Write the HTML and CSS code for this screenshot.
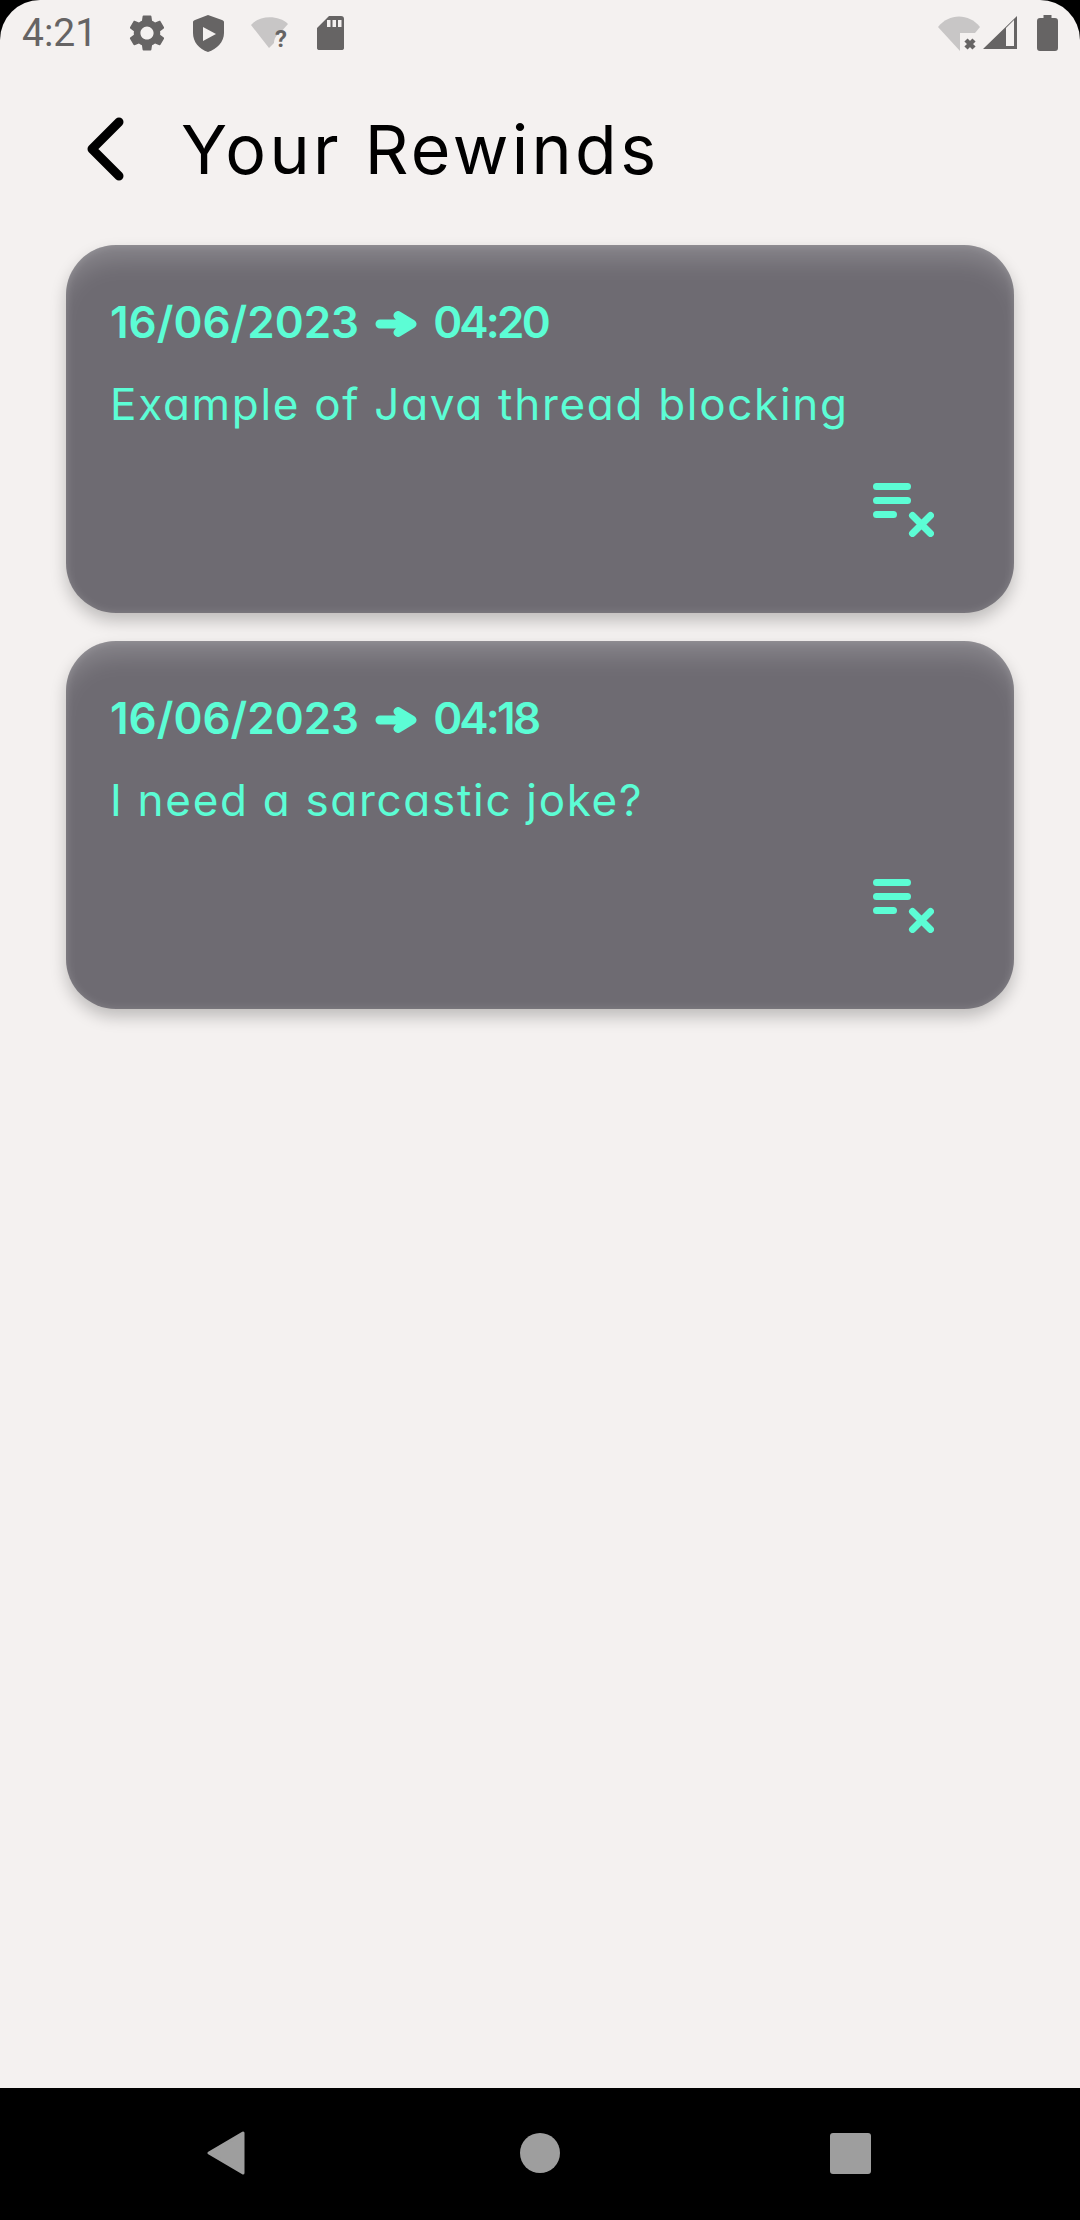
FILE: index.html
```html
<!DOCTYPE html>
<html lang="en">
<head>
  <meta charset="UTF-8">
  <meta name="viewport" content="width=device-width, initial-scale=1.0">
  <title>Your Rewinds</title>
  <link rel="stylesheet" href="styles.css">
</head>
<body>

  <div class="screen">
    <div class="status-bar">
      <span class="status-time">4:21</span>
      <div class="status-icons">
        <svg class="status-icon" viewBox="0 0 24 24"><path d="M19.14 12.94c.04-.3.06-.61.06-.94 0-.32-.02-.64-.07-.94l2.03-1.58c.18-.14.23-.41.12-.61l-1.92-3.32c-.12-.22-.37-.29-.59-.22l-2.39.96c-.5-.38-1.03-.7-1.62-.94l-.36-2.54c-.04-.24-.24-.41-.48-.41h-3.84c-.24 0-.43.17-.47.41l-.36 2.54c-.59.24-1.13.57-1.62.94l-2.39-.96c-.22-.08-.47 0-.59.22L2.74 8.87c-.12.21-.08.47.12.61l2.03 1.58c-.05.3-.09.63-.09.94s.02.64.07.94l-2.03 1.58c-.18.14-.23.41-.12.61l1.92 3.32c.12.22.37.29.59.22l2.39-.96c.5.38 1.03.7 1.62.94l.36 2.54c.05.24.24.41.48.41h3.84c.24 0 .44-.17.47-.41l.36-2.54c.59-.24 1.13-.56 1.62-.94l2.39.96c.22.08.47 0 .59-.22l1.92-3.32c.12-.22.07-.47-.12-.61l-2.01-1.58zM12 15.6c-1.98 0-3.6-1.62-3.6-3.6s1.62-3.6 3.6-3.6 3.6 1.62 3.6 3.6-1.62 3.6-3.6 3.6z"/></svg>
        <svg class="status-icon" viewBox="0 0 44 44"><path fill-rule="evenodd" d="M22 4 L36 9 C37.500 9.500 38 10 38 11.500 V22 C38 31 31 38 22 41 C13 38 7 31 7 22 V11.500 C7 10 7.500 9.500 9 9 Z M17 16 V30 L30 23 Z"/></svg>
        <svg class="status-icon" viewBox="0 0 44 44"><path class="icon-faint" d="M4 14 C12 4 32 4 41 13 L33 22 C29 24 27 28 27 32 L22 37 Z"/><text class="icon-mark" x="34" y="36">?</text></svg>
        <svg class="status-icon" viewBox="0 0 44 44"><path fill-rule="evenodd" d="M21 5 H33 C35 5 36 6 36 8 V37 C36 38.500 35 39 33.500 39 H11.500 C10 39 9 38.500 9 37 V17 Z M19 9 V16 H22.500 V9 Z M24.500 9 V16 H28 V9 Z M30 9 V16 H33.500 V9 Z"/></svg>
      </div>
      <div class="status-right">
        <svg class="status-wifi" viewBox="0 0 42 36"><path class="icon-faint" d="M0 12 C11 -2 31 -2 42 12 L22 36 Z"/><rect class="icon-cutout" x="22" y="18" width="20" height="18"/><path class="icon-cross" d="M28 25 L36 33 M36 25 L28 33"/></svg>
        <svg class="status-signal" viewBox="0 0 34 34"><path fill-rule="evenodd" d="M34 0 V33 H0 Z M23 12 V30 H31 V4 Z"/></svg>
        <svg class="status-battery" viewBox="0 0 21 36"><path d="M6.500 0 H14.500 V3 H18 C20 3 21 4 21 6 V33 C21 35 20 36 18 36 H3 C1 36 0 35 0 33 V6 C0 4 1 3 3 3 H6.500 Z"/></svg>
      </div>
    </div>

    <header class="top-bar">
      <svg class="back-icon" viewBox="0 0 44 72"><path d="M35 9 L8 36 L35 63"/></svg>
      <h1 class="page-title">Your Rewinds</h1>
    </header>

    <main class="rewind-list">
      <article class="rewind-card">
        <p class="rewind-date">16/06/2023<svg class="date-arrow" viewBox="0 0 42 26"><path d="M5 13 H34 M23 4.500 L37 13 L23 21.500"/></svg><span class="date-time">04:20</span></p>
        <p class="rewind-text">Example of Java thread blocking</p>
        <svg class="clear-icon" viewBox="0 0 61 54"><path d="M3.500 3.500 H34.500 M3.500 17.500 H34.500 M3.500 31.500 H20.500 M39.500 32.500 L57.500 50.500 M57.500 32.500 L39.500 50.500"/></svg>
      </article>

      <article class="rewind-card">
        <p class="rewind-date">16/06/2023<svg class="date-arrow" viewBox="0 0 42 26"><path d="M5 13 H34 M23 4.500 L37 13 L23 21.500"/></svg><span class="date-time">04:18</span></p>
        <p class="rewind-text">I need a sarcastic joke?</p>
        <svg class="clear-icon" viewBox="0 0 61 54"><path d="M3.500 3.500 H34.500 M3.500 17.500 H34.500 M3.500 31.500 H20.500 M39.500 32.500 L57.500 50.500 M57.500 32.500 L39.500 50.500"/></svg>
      </article>
    </main>
  </div>

  <nav class="nav-bar">
    <svg class="nav-back" viewBox="0 0 38 44"><path d="M36 2 V42 L2 22 Z"/></svg>
    <span class="nav-home"></span>
    <span class="nav-recent"></span>
  </nav>

</body>
</html>
```

FILE: styles.css
```css
:root {
  --fundo: #f4f1f0;
  --cartao: #6e6b72;
  --acento: #5cfdd5;
  --cinza-status: #666464;
}

* {
  box-sizing: border-box;
}

html,
body {
  height: 100%;
}

body {
  margin: 0;
  background-color: #000;
  display: flex;
  flex-direction: column;
  font-family: Inter, "Open Sans", sans-serif;
}

.screen {
  flex: 1;
  background-color: var(--fundo);
  border-radius: 40px 40px 0 0;
}

/* status bar */
.status-bar {
  display: flex;
  align-items: center;
  height: 66px;
  padding-left: 22px;
  color: var(--cinza-status);
  fill: var(--cinza-status);
}

.status-time {
  font-family: Roboto, sans-serif;
  font-size: 39px;
  width: 73px;
  margin-right: 30px;
}

.status-icons {
  display: flex;
  gap: 17px;
}

.status-icon {
  width: 44px;
  height: 44px;
}

.icon-faint {
  fill: #c8c6c6;
}

.icon-cutout {
  fill: var(--fundo);
}

.icon-mark {
  font-family: Roboto, sans-serif;
  font-size: 24px;
  font-weight: 700;
  text-anchor: middle;
}

.icon-cross {
  fill: none;
  stroke: var(--cinza-status);
  stroke-width: 4.500;
}

.status-right {
  display: flex;
  align-items: center;
  margin-left: auto;
  padding-right: 22px;
}

.status-wifi {
  width: 42px;
  height: 36px;
}

.status-signal {
  width: 34px;
  height: 34px;
  margin-left: 3px;
}

.status-battery {
  width: 21px;
  height: 36px;
  margin-left: 20px;
}

/* header */
.top-bar {
  display: flex;
  align-items: center;
  height: 166px;
  padding-left: 84px;
}

.back-icon {
  width: 44px;
  height: 72px;
  fill: none;
  stroke: #000;
  stroke-width: 9;
  stroke-linecap: round;
  stroke-linejoin: round;
}

.page-title {
  margin: 0 0 0 53px;
  font-size: 68px;
  font-weight: 400;
  letter-spacing: 3.400px;
  color: #000;
}

/* cards */
.rewind-list {
  display: flex;
  flex-direction: column;
  gap: 28px;
  padding: 13px 66px 0 66px;
}

.rewind-card {
  display: flex;
  flex-direction: column;
  height: 368px;
  padding: 47px 80px 76px 44px;
  border-radius: 50px;
  background-color: var(--cartao);
  color: var(--acento);
  box-shadow: 0 8px 16px rgba(0, 0, 0, 0.22), inset 0 26px 26px -13px rgba(255, 255, 255, 0.2), inset 0 0 8px rgba(255, 255, 255, 0.16);
}

.rewind-date {
  display: flex;
  align-items: center;
  margin: 0;
  font-size: 44px;
  font-weight: 600;
  line-height: 60px;
}

.date-arrow {
  width: 42px;
  height: 26px;
  margin: 4px 16px 0 16px;
  fill: none;
  stroke: var(--acento);
  stroke-width: 9;
  stroke-linecap: round;
  stroke-linejoin: round;
}

.date-time {
  letter-spacing: -2.800px;
}

.rewind-text {
  margin: 22px 0 0;
  font-size: 44px;
  font-weight: 400;
  line-height: 60px;
  letter-spacing: 1.700px;
  font-feature-settings: "cv11";
}

.clear-icon {
  align-self: flex-end;
  width: 61px;
  height: 54px;
  margin-top: auto;
  fill: none;
  stroke: var(--acento);
  stroke-width: 7;
  stroke-linecap: round;
}

/* navigation */
.nav-bar {
  display: flex;
  align-items: center;
  height: 132px;
  padding-bottom: 2px;
  background-color: #000;
}

.nav-back {
  width: 38px;
  height: 44px;
  margin-left: 207px;
  fill: #9e9e9e;
  stroke: #9e9e9e;
  stroke-width: 3;
  stroke-linejoin: round;
}

.nav-home {
  width: 40px;
  height: 40px;
  margin-left: 275px;
  border-radius: 50%;
  background-color: #9e9e9e;
}

.nav-recent {
  width: 41px;
  height: 41px;
  margin-left: 270px;
  border-radius: 3px;
  background-color: #9e9e9e;
}
```
